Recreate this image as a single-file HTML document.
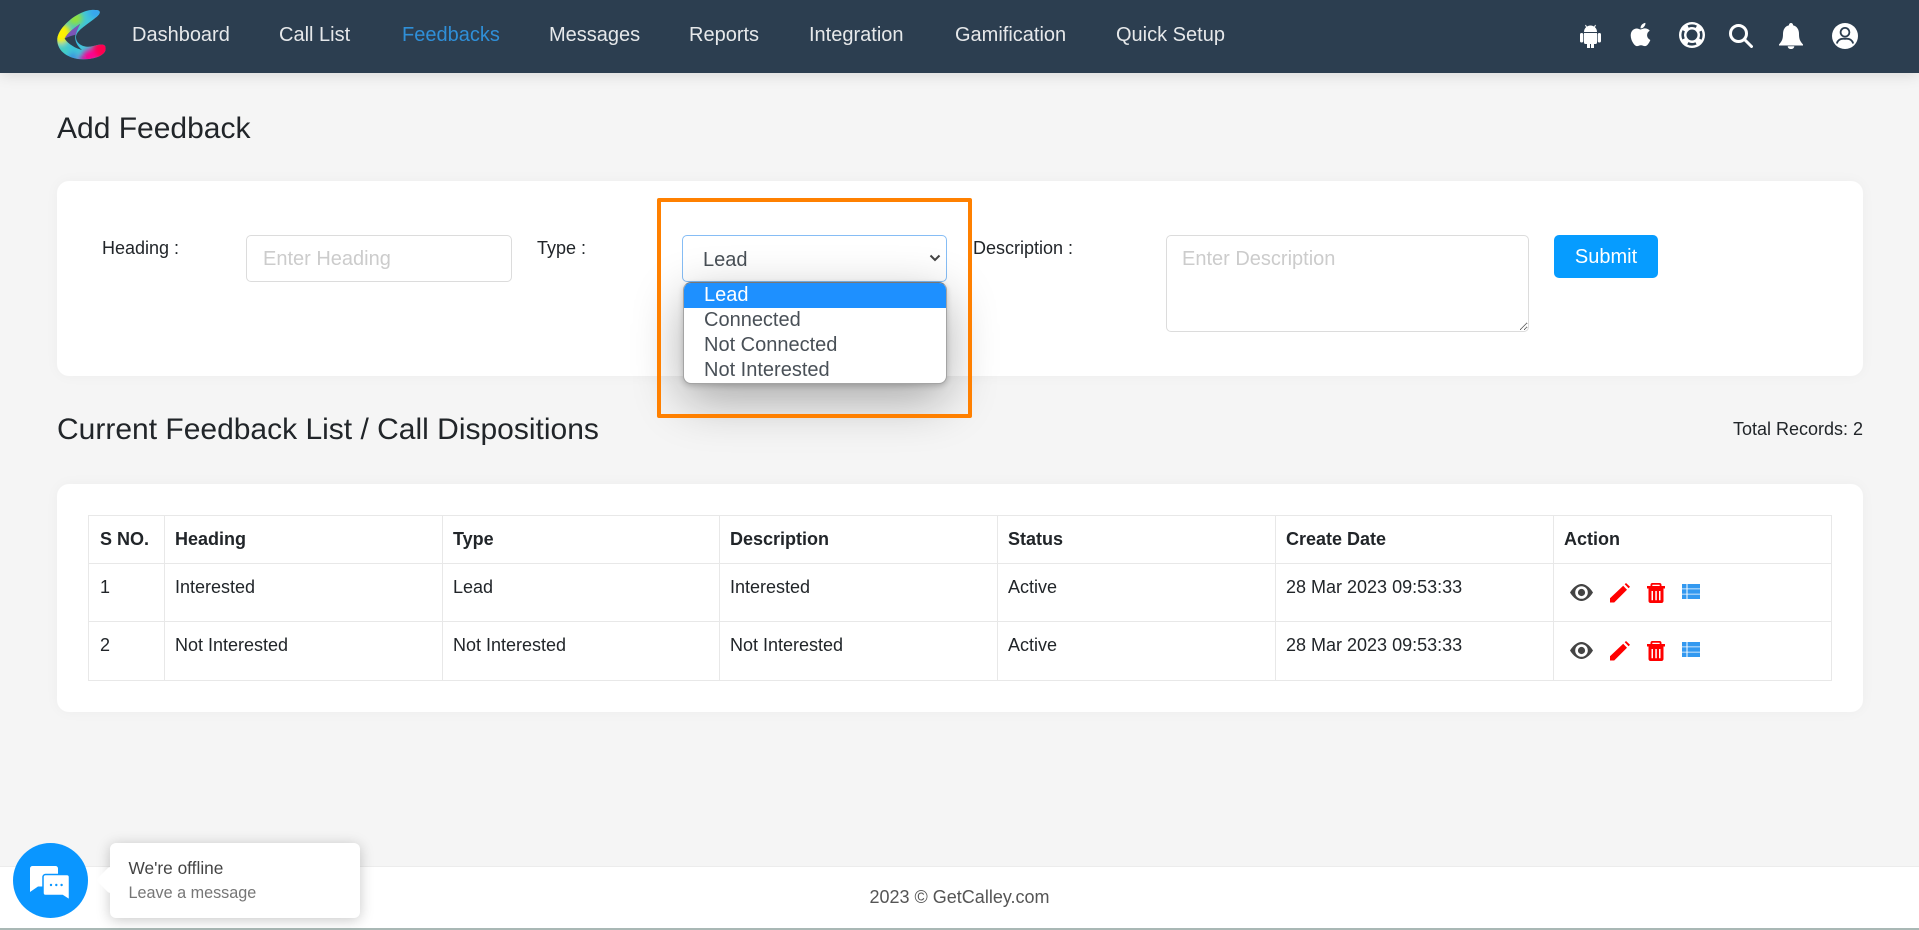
<!DOCTYPE html>
<html lang="en"><head><meta charset="utf-8"><title>Add Feedback</title>
<style>
*{box-sizing:border-box}
html,body{margin:0;padding:0}
body{width:1919px;height:930px;position:relative;overflow:hidden;background:#f5f5f5;font-family:"Liberation Sans",Arial,sans-serif;color:#212529;font-size:18px}
.abs{position:absolute;white-space:nowrap}
nav{position:absolute;left:0;top:0;width:1919px;height:73px;background:#2c3e50;box-shadow:0 2px 14px rgba(0,0,0,.12)}
nav a{position:absolute;top:23px;font-size:20px;line-height:24px;color:#e6e8ea;text-decoration:none;white-space:nowrap}
nav a.on{color:#2f8fd8}
nav svg{position:absolute;fill:#fff}
h1,h2{margin:0;font-weight:400;position:absolute;white-space:nowrap;color:#212529}
h1{left:57px;top:110.500px;font-size:30px;line-height:36px}
h2{left:57px;top:412px;font-size:30px;line-height:36px}
.card{position:absolute;left:57px;width:1806px;background:#fff;border-radius:12px;box-shadow:0 0 14px rgba(0,0,0,.035)}
label{position:absolute;top:237px;line-height:22px;font-size:18px;white-space:nowrap}
input,textarea,select{position:absolute;font-family:"Liberation Sans",Arial,sans-serif;font-size:20px;background:#fff;border:1px solid #dcdcdc;border-radius:5px;color:#495057;outline:none;margin:0}
input::placeholder,textarea::placeholder{color:#ccc;opacity:1}
input{left:246px;top:235px;width:266px;height:47px;padding:2px 16px 0}
select{left:682px;top:235px;width:265px;height:47px;padding:2px 16px 0 20px;border-color:#86bdf5;appearance:none;-webkit-appearance:none}
textarea{left:1166px;top:235px;width:363px;height:97px;padding:12px 15px;resize:vertical}
.btn{position:absolute;left:1554px;top:235px;width:104px;height:43px;background:#069cff;color:#fff;border:0;border-radius:5px;font:20px/44px "Liberation Sans",Arial,sans-serif;text-align:center;padding:0}
.list{position:absolute;left:683px;top:282px;width:264px;height:102px;background:#fff;border:1px solid #a4a4a4;border-top-color:#777;border-radius:8px;box-shadow:0 2px 6px rgba(0,0,0,.18),0 16px 50px rgba(0,0,0,.32);overflow:hidden;font-size:20px;line-height:25px;color:#495057}
.list div{height:25px;padding-left:20px;margin-top:0}
.list .sel{background:#1e90ff;color:#fff}
.mark{position:absolute;left:657px;top:198px;width:315px;height:220px;border:4px solid #ff8000;border-radius:2px}
table{position:absolute;left:88px;top:515px;width:1743px;border-collapse:collapse;table-layout:fixed;background:#fff;font-size:18px;line-height:22px}
th,td{border:1px solid #e8e8e8;text-align:left;vertical-align:top;padding:12px 10px 0;white-space:nowrap}
th{font-weight:700;height:48px;padding-top:12px}
tr th:first-child,tr td:first-child{padding-left:11px}
td{height:58px}
tr.r2 td{height:59px}
.ic{position:absolute}
footer{position:absolute;left:0;top:866px;width:1919px;height:64px;background:#fff;border-top:1px solid #ececec;border-bottom:2px solid #a9b8b5;text-align:center;font-size:18px;line-height:60px;color:#555}
.chat{position:absolute;left:13px;top:843px;width:75px;height:75px;border-radius:50%;background:#0a96ff}
.bub{position:absolute;left:110px;top:843px;width:250px;height:75px;background:#fff;border-radius:6px;box-shadow:0 2px 14px rgba(0,0,0,.22)}
.bub:before{content:"";position:absolute;left:-10px;top:27px;width:20px;height:20px;background:#fff;border-radius:3px;transform:rotate(45deg)}
.bub b{position:absolute;left:18.500px;top:14px;font-weight:400;font-size:17.300px;line-height:22px;color:#444;white-space:nowrap}
.bub i{position:absolute;left:18.500px;top:40px;font-style:normal;font-size:16.200px;line-height:20px;color:#767676;white-space:nowrap}
</style></head><body>
<nav>
<svg style="left:40px;top:0" width="90" height="70" viewBox="0 0 270 210">
<defs>
<clipPath id="cl"><path d="M178,33C184,42 168,52 150,66C128,83 108,95 108,112C108,130 128,142 150,140C170,137 197,124 197,146C197,166 165,178 130,178C85,178 50,152 52,118C54,80 120,26 165,30C172,30 176,31 178,33Z"/></clipPath>
<filter id="bl" x="-50%" y="-50%" width="200%" height="200%"><feGaussianBlur stdDeviation="8"/></filter>
</defs>
<g clip-path="url(#cl)">
<rect width="270" height="210" fill="#3fc4d8"/>
<g filter="url(#bl)">
<circle cx="62" cy="100" r="30" fill="#fff000"/>
<circle cx="105" cy="55" r="22" fill="#8fe040"/>
<circle cx="168" cy="35" r="22" fill="#38a6ee"/>
<circle cx="68" cy="150" r="16" fill="#45d0c0"/>
<circle cx="98" cy="172" r="12" fill="#3a86e0"/>
<circle cx="128" cy="178" r="12" fill="#b01eb0"/>
<circle cx="188" cy="150" r="32" fill="#ff0050"/>
<circle cx="150" cy="168" r="20" fill="#ff0090"/>
<circle cx="118" cy="122" r="10" fill="#38a6ee"/>
</g>
</g>
<path d="M120,72C100,86 82,100 74,116C84,132 108,146 126,150C112,138 104,124 106,108C108,94 114,84 120,72Z" fill="#2c3e50"/>
<path d="M120,72C100,86 82,100 74,116C84,110 100,106 108,104C110,92 115,84 120,72Z" fill="#7a55b8"/>
</svg>
<a style="left:132px">Dashboard</a><a style="left:279px">Call List</a><a class="on" style="left:402px">Feedbacks</a><a style="left:549px">Messages</a><a style="left:689px">Reports</a><a style="left:809px">Integration</a><a style="left:955px">Gamification</a><a style="left:1116px">Quick Setup</a>
<svg style="left:1580px;top:23px" width="21" height="25" viewBox="0 0 21 25"><path d="M4 9A6.500 6.500 0 0 1 17 9Z"/><path d="M5.500 2L7 5M15.500 2L14 5" stroke="#fff" stroke-width="1"/><path d="M4 10H17V19.500A1.500 1.500 0 0 1 15.500 21H14V25H11V21H10V25H7V21H5.500A1.500 1.500 0 0 1 4 19.500Z"/><rect x="0" y="10" width="3.300" height="9.500" rx="1.600"/><rect x="17.700" y="10" width="3.300" height="9.500" rx="1.600"/></svg>
<svg style="left:1630px;top:22px" width="21" height="25" viewBox="0 16 384 480"><path d="M318.7 268.7c-.2-36.7 16.400-64.400 50-84.800-18.800-26.900-47.200-41.700-84.700-44.600-35.500-2.800-74.300 20.700-88.500 20.700-15 0-49.400-19.700-76.400-19.700C63.300 141.200 4 184.800 4 273.500q0 39.300 14.400 81.200c12.800 36.700 59 126.700 107.200 125.200 25.200-.6 43-17.900 75.800-17.900 31.800 0 48.300 17.900 76.400 17.900 48.600-.7 90.400-82.500 102.600-119.300-65.200-30.700-61.700-90-61.700-91.900zm-56.600-164.200c27.300-32.400 24.800-61.900 24-72.500-24.100 1.400-52 16.400-67.900 34.900-17.500 19.800-27.800 44.300-25.600 71.900 26.100 2 49.900-11.400 69.500-34.300z"/></svg>
<svg style="left:1679px;top:22px" width="26" height="26" viewBox="0 0 26 26"><path fill-rule="evenodd" d="M13 0a13 13 0 1 0 0 26a13 13 0 1 0 0-26zM13 7.500a5.500 5.500 0 1 1 0 11a5.500 5.500 0 1 1 0-11z"/><circle cx="13" cy="13" r="9.300" fill="none" stroke="#2c3e50" stroke-width="2.600" stroke-dasharray="8.500 6.100" stroke-dashoffset="4.250"/></svg>
<svg style="left:1729px;top:24px" width="24" height="24" viewBox="0 0 24 24"><circle cx="9.500" cy="9.500" r="8" fill="none" stroke="#fff" stroke-width="3"/><path d="M15.500 15.500L22.500 22.500" stroke="#fff" stroke-width="3" stroke-linecap="round"/></svg>
<svg style="left:1779px;top:23px" width="24" height="26" viewBox="0 0 24 26"><path d="M12 0a2 2 0 0 1 2 2.200C18 3.200 20 6.500 20 11C20 16 21 18 24 21.500V22.500H0V21.500C3 18 4 16 4 11C4 6.500 6 3.200 10 2.200A2 2 0 0 1 12 0Z"/><path d="M8.700 23.300H15.300A3.300 2.800 0 0 1 8.700 23.300Z"/></svg>
<svg style="left:1832px;top:23px" width="26" height="26" viewBox="0 0 26 26"><circle cx="13" cy="13" r="13"/><circle cx="13" cy="9.300" r="4.400" fill="#fff" stroke="#2c3e50" stroke-width="1.800"/><path d="M4.800 20.500C6 16.500 9 15.300 13 15.800C17 15.300 20 16.500 21.200 20.500" fill="none" stroke="#2c3e50" stroke-width="1.800"/></svg>
</nav>

<h1>Add Feedback</h1>
<div class="card" style="top:181px;height:195px"></div>
<label style="left:102px">Heading :</label>
<input type="text" placeholder="Enter Heading">
<label style="left:537px">Type :</label>
<h2>Current Feedback List / Call Dispositions</h2>
<div class="abs" style="right:56px;top:418px;line-height:22px">Total Records: 2</div>
<label style="left:973px">Description :</label>
<textarea placeholder="Enter Description"></textarea>
<button class="btn">Submit</button>

<div class="card" style="top:484px;height:228px"></div>
<table>
<colgroup><col style="width:76px"><col style="width:278px"><col style="width:277px"><col style="width:278px"><col style="width:278px"><col style="width:278px"><col style="width:278px"></colgroup>
<tr><th>S NO.</th><th>Heading</th><th>Type</th><th>Description</th><th>Status</th><th>Create Date</th><th>Action</th></tr>
<tr><td>1</td><td>Interested</td><td>Lead</td><td>Interested</td><td>Active</td><td>28 Mar 2023 09:53:33</td><td></td></tr>
<tr class="r2"><td>2</td><td>Not Interested</td><td>Not Interested</td><td>Not Interested</td><td>Active</td><td>28 Mar 2023 09:53:33</td><td></td></tr>
</table>

<svg class="ic" style="left:1570px;top:583px" width="132" height="80" viewBox="0 0 132 80">
<defs><g id="acts">
<path fill="#444" fill-rule="evenodd" d="M0 9.500C3.500 3.700 8 1 11.500 1S19.500 3.700 23 9.500C19.500 15.300 15 18 11.500 18S3.500 15.300 0 9.500ZM11.500 3.200a6.300 6.300 0 1 0 0 12.600a6.300 6.300 0 1 0 0-12.600Z"/>
<circle cx="11.500" cy="9.500" r="3.600" fill="#444"/>
<path fill="#f00" d="M40 19.500V15.200L53.200 2.700L57 6.700L44.200 19.500ZM54.700 1.300L56 0L60 3.800L58.600 5.300Z"/>
<path fill="#f00" fill-rule="evenodd" d="M80.500 3V2C80.500 .8 81.300 0 82.500 0H89.500C90.700 0 91.500 .8 91.500 2V3H95V5.500H93.500V18C93.500 19.300 92.500 20 91.500 20H80.500C79.500 20 78.500 19.300 78.500 18V5.500H77V3ZM82.300 3H89.700V2C89.700 1.800 89.500 1.700 89.300 1.700H82.700C82.500 1.700 82.300 1.800 82.300 2ZM81.500 8V17.300H83V8ZM85.300 8V17.300H86.800V8ZM89 8V17.300H90.500V8Z"/>
<path fill="#3399f0" d="M112 1H116.500V5.500H112ZM117.500 1H130V5.500H117.500ZM112 6.300H116.500V10.700H112ZM117.500 6.300H130V10.700H117.500ZM112 11.500H116.500V16H112ZM117.500 11.500H130V16H117.500Z"/>
</g></defs>
<use href="#acts"/><use href="#acts" y="58"/>
</svg>

<select><option>Lead</option><option>Connected</option><option>Not Connected</option><option>Not Interested</option></select>
<svg class="ic" style="left:929px;top:254px" width="12" height="8" viewBox="0 0 12 8"><path d="M1.500 1.500L6 6L10.500 1.500" fill="none" stroke="#444" stroke-width="2"/></svg>
<div class="list"><div class="sel">Lead</div><div>Connected</div><div>Not Connected</div><div>Not Interested</div></div>
<div class="mark"></div>

<footer>2023 © GetCalley.com</footer>
<div class="chat"><svg style="position:absolute;left:17px;top:23px" width="42" height="36" viewBox="0 0 42 36"><path fill="#fff" d="M2.500 0H25.500A2.500 2.500 0 0 1 28 2.500V18A2.500 2.500 0 0 1 25.500 20.500H8L0 26V2.500A2.500 2.500 0 0 1 2.500 0Z"/><path fill="#fff" stroke="#0a96ff" stroke-width="1.500" d="M15.500 8.500H37A2.500 2.500 0 0 1 39.500 11V34L32.500 29.500H15.500A2.500 2.500 0 0 1 13 27V11A2.500 2.500 0 0 1 15.500 8.500Z"/><circle cx="21" cy="19" r="1.200" fill="#0a96ff"/><circle cx="26.300" cy="19" r="1.200" fill="#0a96ff"/><circle cx="31.600" cy="19" r="1.200" fill="#0a96ff"/></svg></div>
<div class="bub"><b>We're offline</b><i>Leave a message</i></div>
</body></html>
